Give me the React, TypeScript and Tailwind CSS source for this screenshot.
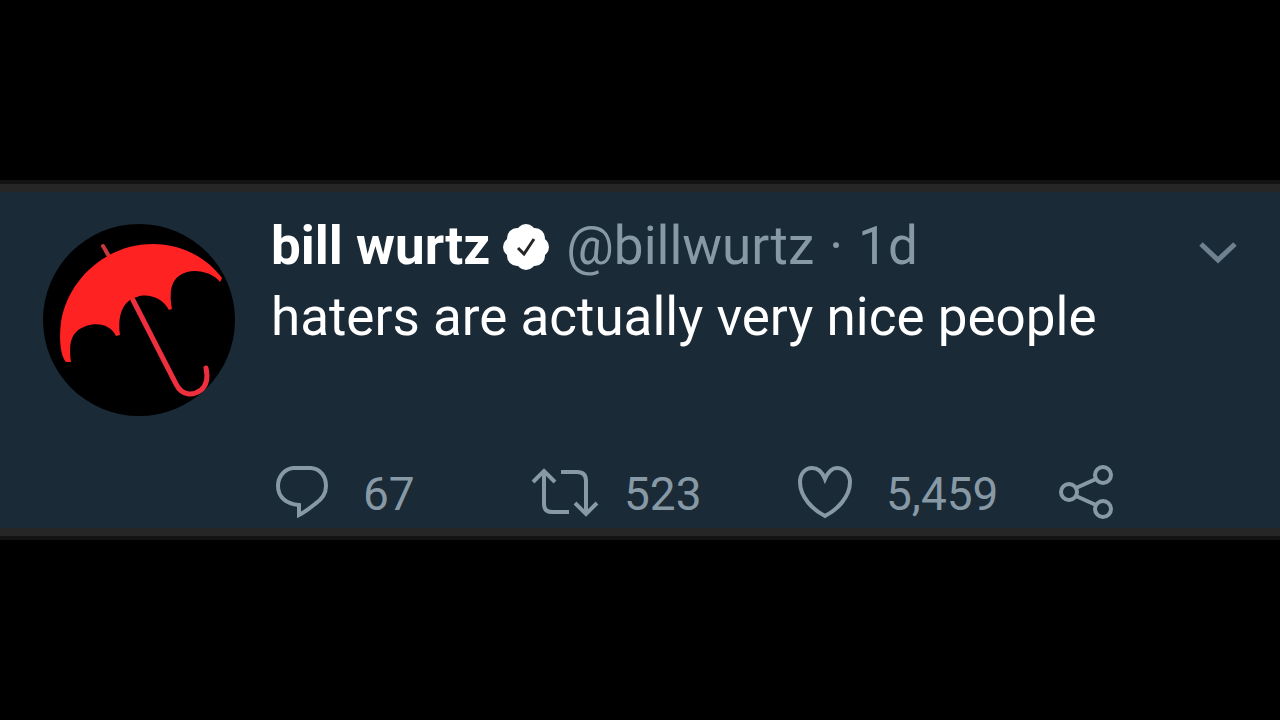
import type { ReactNode } from "react";

type ActionProps = {
  label: string;
  count?: string;
  className?: string;
  children: ReactNode;
};

function Action({ label, count, className = "", children }: ActionProps) {
  return (
    <button type="button" aria-label={label} className={`flex items-center text-left ${className}`}>
      {children}
      {count && <span className="pt-1">{count}</span>}
    </button>
  );
}

function Avatar() {
  return (
    <svg className="size-48 shrink-0" viewBox="0 0 192 192" role="img" aria-label="Red umbrella">
      <circle cx="96" cy="96" r="96" fill="#000" />
      <g fill="none" strokeLinecap="round">
        <path d="M60 22l7 12" strokeWidth="4" stroke="#c8383c" />
        <path d="M90 76l43 84c6 12 17 12 25 6c6-5 7-13 5-22" strokeWidth="5" stroke="#ee2f3d" />
      </g>
      <path
        fill="#ff2222"
        d="M23 138C17 131 16 114 18 98C24 62 51 33 86 23C122 14 158 26 179 54L177 58C170 49 155 45 144 48C130 52 125 64 129 85L126 86C119 73 104 69 94 73C80 76 74 92 77 111L73 112C68 101 55 98 43 102C29 107 25 117 28 138Z"
      />
    </svg>
  );
}

function VerifiedBadge() {
  return (
    <svg className="mx-3 h-12 w-12 shrink-0" viewBox="0 0 48 48" role="img" aria-label="Verified account">
      <g fill="#fff">
        <circle cx="24" cy="24" r="20" />
        <circle cx="24" cy="11" r="10" />
        <circle cx="33" cy="15" r="10" />
        <circle cx="37" cy="24" r="10" />
        <circle cx="33" cy="33" r="10" />
        <circle cx="24" cy="37" r="10" />
        <circle cx="15" cy="33" r="10" />
        <circle cx="11" cy="24" r="10" />
        <circle cx="15" cy="15" r="10" />
      </g>
      <path d="M16 25l6 6L32 16" fill="none" stroke="#262626" strokeWidth="3" />
    </svg>
  );
}

export default function App() {
  return (
    <main className="flex min-h-screen flex-col justify-center bg-black font-['Roboto',sans-serif]">
      <div className="border-y-4 border-[#131313]">
        <article className="flex border-y-8 border-[#262626] bg-[#1a2a37] pr-[42px] pl-[43px]">
          <div className="pt-8">
            <Avatar />
          </div>

          <div className="ml-9 min-w-0 flex-1 pt-[19px] pb-[2px]">
            {/* Author line */}
            <header className="flex items-center text-[53px] leading-[71px] whitespace-nowrap text-[#8899a6]">
              <span className="font-bold text-white">bill wurtz</span>
              <VerifiedBadge />
              <a href="#profile" className="ml-1">@billwurtz</a>
              <span className="mx-[15px]">·</span>
              <time>1d</time>
              <button type="button" aria-label="More options" className="mt-3 ml-auto">
                <svg className="h-6 w-10" viewBox="0 0 40 24" fill="none" stroke="#6f808f" strokeWidth="5">
                  <path d="M3 3l17 16L37 3" />
                </svg>
              </button>
            </header>

            <p className="text-[53px] leading-[71px] text-white">haters are actually very nice people</p>

            {/* Actions */}
            <div className="mt-[105px] flex items-center text-[46px] leading-[64px] text-[#8899a6]">
              <Action label="Reply" count="67" className="w-[257px] gap-8">
                <svg className="ml-1 h-14 w-14 shrink-0" viewBox="0 0 56 56" fill="none" stroke="currentColor" strokeWidth="4">
                  <path d="M18 4H36C46 5 51 13 51 22C51 31 46 36 40 40C35 44 30 48 24 51V41C11 40 3 33 3 22C3 12 10 5 18 4Z" />
                </svg>
              </Action>
              <Action label="Retweet" count="523" className="w-[266px] gap-7">
                <svg className="ml-1 h-14 w-16 shrink-0 overflow-visible" viewBox="0 0 64 56" fill="none" stroke="currentColor" strokeWidth="4">
                  <path d="M1 18L12 7l11 11M12 9V40Q12 48 20 48H37M29 8H45Q54 8 54 17V49M43 39l11 11L65 39" />
                </svg>
              </Action>
              <Action label="Like" count="5,459" className="w-[260px] gap-8">
                <svg className="ml-1 h-14 w-14 shrink-0" viewBox="0 0 56 56" fill="none" stroke="currentColor" strokeWidth="4">
                  <path d="M27 15C24 7 19 4 14 4C7 4 2 10 2 18C2 33 15 46 27 52C39 46 52 33 52 18C52 10 46 4 39 4C34 4 30 8 27 15Z" />
                </svg>
              </Action>
              <Action label="Share">
                <svg className="ml-1 h-14 w-14 shrink-0" viewBox="0 0 56 56" fill="none" stroke="currentColor" strokeWidth="4">
                  <circle cx="11" cy="28" r="8" />
                  <circle cx="45" cy="11" r="8" />
                  <circle cx="45" cy="45" r="8" />
                  <path d="M18 24l20-9M18 32l20 9" />
                </svg>
              </Action>
            </div>
          </div>
        </article>
      </div>
    </main>
  );
}
